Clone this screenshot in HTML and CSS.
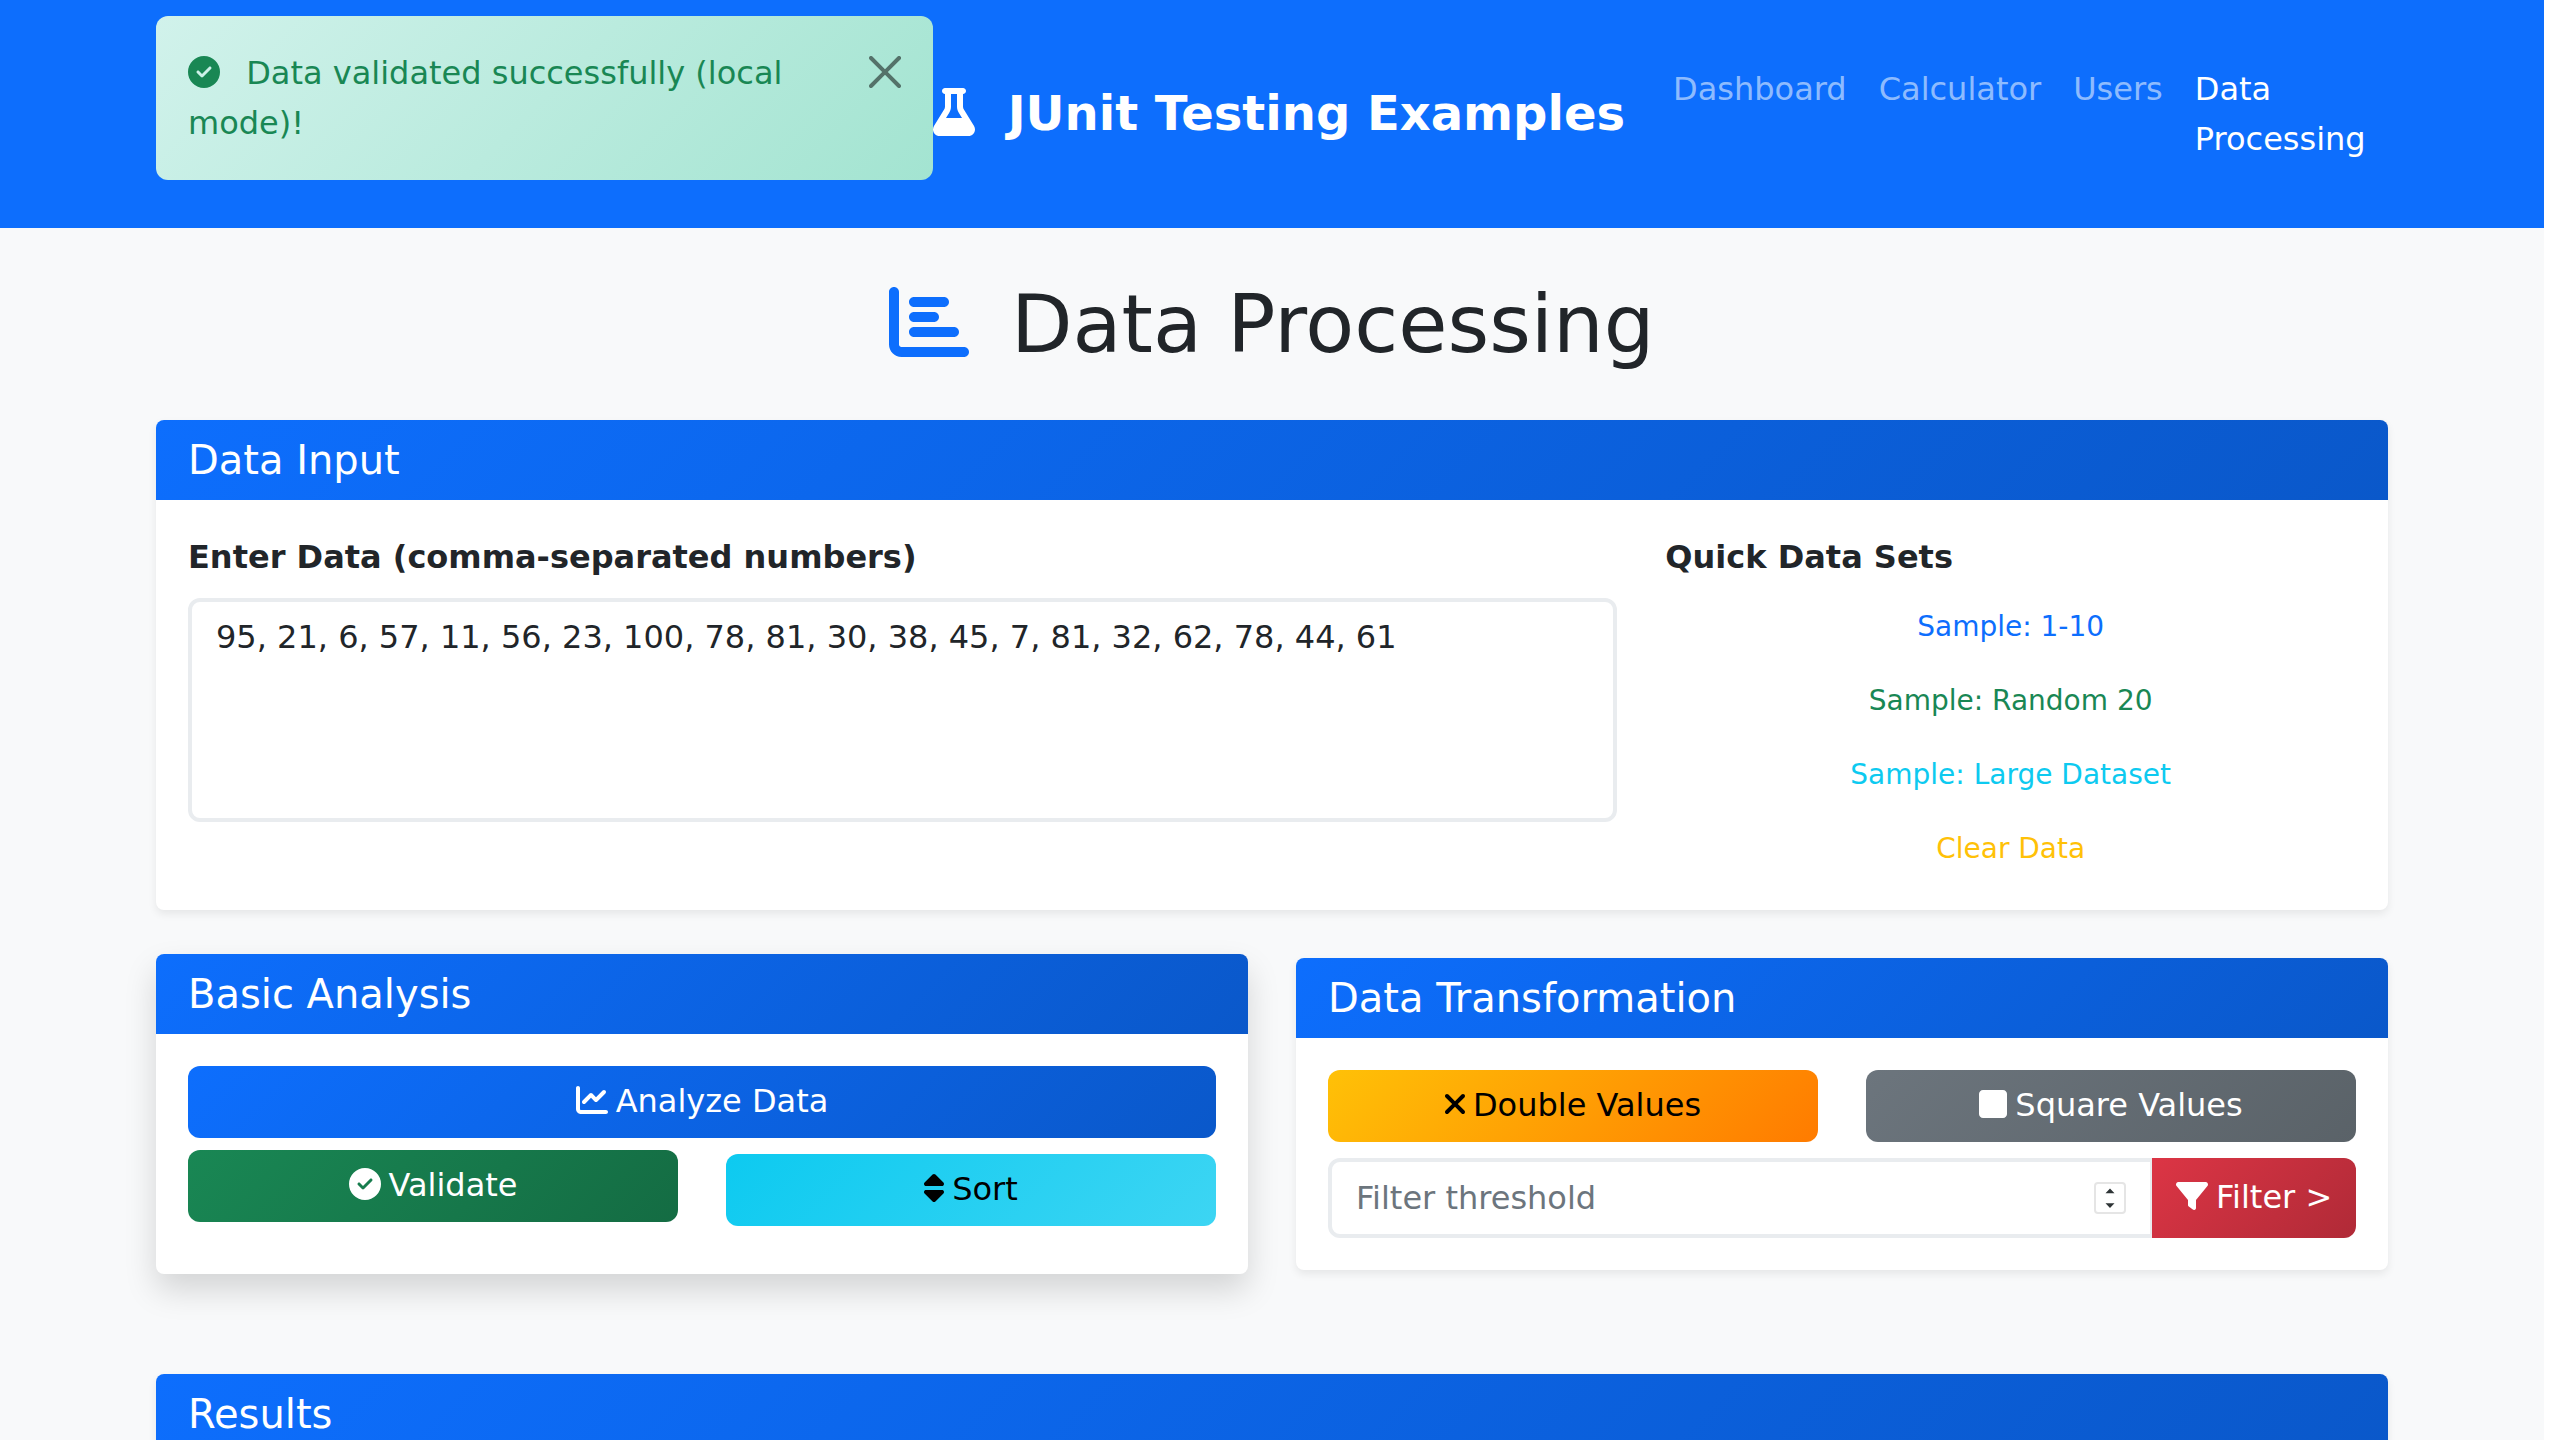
FILE: index.html
```html
<!DOCTYPE html>
<html lang="en">
<head>
<meta charset="utf-8">
<title>Data Processing - JUnit Testing Examples</title>
<link rel="stylesheet" href="styles.css">
</head>
<body>
<div class="page">
  <nav class="navbar">
    <div class="container navbar-inner">
      <div class="alert" role="alert">
        <svg class="icon alert-icon" viewBox="0 0 512 512"><path d="M256 512A256 256 0 1 0 256 0a256 256 0 1 0 0 512zM369 209L241 337c-9.4 9.4-24.6 9.4-33.9 0l-64-64c-9.4-9.4-9.4-24.6 0-33.9s24.6-9.4 33.9 0l47 47L335 175c9.4-9.4 24.6-9.4 33.9 0s9.4 24.6 0 33.9z"/></svg>
        Data validated successfully (local mode)!
        <button class="close" type="button" aria-label="Close"><svg viewBox="0 0 16 16"><path d="M.293.293a1 1 0 0 1 1.414 0L8 6.586 14.293.293a1 1 0 1 1 1.414 1.414L9.414 8l6.293 6.293a1 1 0 0 1-1.414 1.414L8 9.414l-6.293 6.293a1 1 0 0 1-1.414-1.414L6.586 8 .293 1.707a1 1 0 0 1 0-1.414z"/></svg></button>
      </div>
      <a class="brand"><svg class="icon icon-448 brand-icon" viewBox="0 0 448 512"><path d="M288 0H160 128C110.3 0 96 14.3 96 32s14.3 32 32 32V196.8c0 11.8-3.3 23.5-9.5 33.5L10.3 406.2C3.6 417.2 0 429.7 0 442.6C0 480.9 31.1 512 69.4 512H378.6c38.3 0 69.4-31.1 69.4-69.4c0-12.8-3.6-25.4-10.3-36.4L329.5 230.4c-6.2-10.1-9.5-21.7-9.5-33.5V64c17.7 0 32-14.3 32-32s-14.3-32-32-32H288zM192 196.8V64h64V196.8c0 23.7 6.6 46.9 19 67.1L309.5 320h-171L173 263.9c12.4-20.2 19-43.4 19-67.1z"/></svg> JUnit Testing Examples</a>
      <div class="nav-links">
        <a class="nav-link">Dashboard</a>
        <a class="nav-link">Calculator</a>
        <a class="nav-link">Users</a>
        <a class="nav-link active">Data Processing</a>
      </div>
    </div>
  </nav>

  <main class="container">
    <h1 class="title"><svg class="icon title-icon" viewBox="0 0 512 512"><path d="M32 32c17.7 0 32 14.3 32 32V400c0 8.8 7.2 16 16 16H480c17.7 0 32 14.3 32 32s-14.3 32-32 32H80c-44.2 0-80-35.8-80-80V64C0 46.3 14.3 32 32 32zm96 96c0-17.7 14.3-32 32-32l192 0c17.7 0 32 14.3 32 32s-14.3 32-32 32l-192 0c-17.7 0-32-14.3-32-32zm32 64H288c17.7 0 32 14.3 32 32s-14.3 32-32 32H160c-17.7 0-32-14.3-32-32s14.3-32 32-32zm0 96H416c17.7 0 32 14.3 32 32s-14.3 32-32 32H160c-17.7 0-32-14.3-32-32s14.3-32 32-32z"/></svg> Data Processing</h1>

    <section class="card">
      <h5 class="card-header">Data Input</h5>
      <div class="card-body input-grid">
        <div>
          <label class="label" for="data">Enter Data (comma-separated numbers)</label>
          <textarea id="data" class="textarea" spellcheck="false">95, 21, 6, 57, 11, 56, 23, 100, 78, 81, 30, 38, 45, 7, 81, 32, 62, 78, 44, 61</textarea>
        </div>
        <div>
          <div class="label">Quick Data Sets</div>
          <div class="samples">
            <button class="sample sample-primary" type="button">Sample: 1-10</button>
            <button class="sample sample-success" type="button">Sample: Random 20</button>
            <button class="sample sample-info" type="button">Sample: Large Dataset</button>
            <button class="sample sample-warning" type="button">Clear Data</button>
          </div>
        </div>
      </div>
    </section>

    <div class="card-row">
      <section class="card card-raised">
        <h5 class="card-header">Basic Analysis</h5>
        <div class="card-body analysis-body">
          <button class="btn btn-primary" type="button"><svg class="icon" viewBox="0 0 512 512"><path d="M64 64c0-17.7-14.3-32-32-32S0 46.3 0 64V400c0 44.2 35.8 80 80 80H480c17.7 0 32-14.3 32-32s-14.3-32-32-32H80c-8.8 0-16-7.2-16-16V64zm406.6 86.6c12.5-12.5 12.5-32.8 0-45.3s-32.8-12.5-45.3 0L320 210.7l-57.4-57.4c-12.5-12.5-32.8-12.5-45.3 0l-112 112c-12.5 12.5-12.5 32.8 0 45.3s32.8 12.5 45.3 0L240 221.3l57.4 57.4c12.5 12.5 32.8 12.5 45.3 0l128-128z"/></svg>Analyze Data</button>
          <div class="btn-pair">
            <button class="btn btn-success btn-raised" type="button"><svg class="icon" viewBox="0 0 512 512"><path d="M256 512A256 256 0 1 0 256 0a256 256 0 1 0 0 512zM369 209L241 337c-9.4 9.4-24.6 9.4-33.9 0l-64-64c-9.4-9.4-9.4-24.6 0-33.9s24.6-9.4 33.9 0l47 47L335 175c9.4-9.4 24.6-9.4 33.9 0s9.4 24.6 0 33.9z"/></svg>Validate</button>
            <button class="btn btn-info" type="button"><svg class="icon icon-320" viewBox="0 0 320 512"><path d="M137.4 41.4c12.5-12.5 32.8-12.5 45.3 0l128 128c9.2 9.2 11.9 22.9 6.9 34.9s-16.6 19.8-29.6 19.8H32c-12.9 0-24.6-7.8-29.6-19.8s-2.2-25.7 6.9-34.9l128-128zm0 429.3l-128-128c-9.2-9.2-11.9-22.9-6.9-34.9s16.6-19.8 29.6-19.8H288c12.9 0 24.6 7.8 29.6 19.8s2.2 25.7-6.9 34.9l-128 128c-12.5 12.5-32.8 12.5-45.3 0z"/></svg>Sort</button>
          </div>
        </div>
      </section>

      <section class="card">
        <h5 class="card-header">Data Transformation</h5>
        <div class="card-body transform-body">
          <div class="btn-pair">
            <button class="btn btn-warning" type="button"><svg class="icon icon-320" viewBox="0 0 320 512"><path d="M310.6 150.6c12.5-12.5 12.5-32.8 0-45.3s-32.8-12.5-45.3 0L160 210.7 54.6 105.4c-12.5-12.5-32.8-12.5-45.3 0s-12.5 32.8 0 45.3L114.7 256 9.4 361.4c-12.5 12.5-12.5 32.8 0 45.3s32.8 12.5 45.3 0L160 301.3 265.4 406.6c12.5 12.5 32.8 12.5 45.3 0s12.5-32.8 0-45.3L205.3 256 310.6 150.6z"/></svg>Double Values</button>
            <button class="btn btn-secondary" type="button"><svg class="icon icon-448" viewBox="0 0 448 512"><path d="M0 96C0 60.7 28.7 32 64 32H384c35.3 0 64 28.7 64 64V416c0 35.3-28.7 64-64 64H64c-35.3 0-64-28.7-64-64V96z"/></svg>Square Values</button>
          </div>
          <div class="filter-group">
            <div class="filter-field">
              <input class="filter-input" type="text" placeholder="Filter threshold" aria-label="Filter threshold">
              <span class="spinner"><svg viewBox="0 0 32 32"><path d="M11.5 11.2L16 6.5l4.5 4.7zM11.5 21.3h9L16 26z"/></svg></span>
            </div>
            <button class="btn btn-danger" type="button"><svg class="icon" viewBox="0 0 512 512"><path d="M3.9 54.9C10.5 40.9 24.5 32 40 32H472c15.5 0 29.5 8.9 36.1 22.9s4.6 30.5-5.2 42.5L320 320.9V448c0 12.1-6.8 23.2-17.7 28.6s-23.8 4.3-33.5-3l-64-48c-8.1-6-12.8-15.5-12.8-25.6V320.9L9 97.3C-.7 85.4-2.8 68.8 3.9 54.9z"/></svg>Filter &gt;</button>
          </div>
        </div>
      </section>
    </div>

    <section class="card">
      <h5 class="card-header">Results</h5>
      <div class="card-body"></div>
    </section>
  </main>
</div>
</body>
</html>
```
FILE: styles.css
```css
* { box-sizing: border-box; }
html { background: #fff; }
body {
  margin: 0;
  height: 1440px;
  overflow: hidden;
  font: 32px/50px "DejaVu Sans", sans-serif;
  color: #212529;
}
button, input, textarea { font: inherit; margin: 0; }
h1, h5 { margin: 0; font-weight: 400; }

.page { width: 2544px; height: 1440px; overflow: hidden; background: #f8f9fa; }
.container { width: 2232px; margin: 0 auto; }

.icon { width: 1em; height: 1em; fill: currentColor; overflow: visible; vertical-align: -0.125em; }
.icon-448 { width: 0.875em; }
.icon-320 { width: 0.625em; }

/* Navbar */
.navbar { background: #0d6efd; }
.navbar-inner { display: flex; align-items: center; height: 228px; }
.alert {
  position: relative;
  flex: 0 0 777px;
  margin-bottom: 32px;
  padding: 32px 96px 32px 32px;
  border-radius: 12px;
  background: linear-gradient(135deg, #d1f2eb, #a3e4d1);
  color: #198754;
}
.alert-icon { margin-right: 16px; }
.close {
  position: absolute;
  top: 0;
  right: 0;
  padding: 40px 32px;
  border: 0;
  background: none;
  line-height: 0;
  opacity: 0.5;
}
.close svg { width: 32px; height: 32px; }
.brand {
  flex: none;
  margin-right: 32px;
  padding-bottom: 2px;
  font-size: 48px;
  line-height: 72px;
  font-weight: 700;
  color: #fff;
  white-space: nowrap;
}
.brand-icon { margin-right: 16px; }
.nav-links { display: flex; flex: 1; }
.nav-link { padding: 16px; color: rgba(255, 255, 255, 0.55); }
.nav-link.active { color: #fff; }

/* Heading */
.title { margin: 48px 0; padding-top: 1px; height: 96px; font-size: 80px; line-height: 96px; text-align: center; }
.title-icon { margin-right: 16px; color: #0d6efd; }

/* Cards */
.card {
  margin-bottom: 48px;
  border-radius: 8px;
  background: #fff;
  box-shadow: 0 4px 8px rgba(0, 0, 0, 0.075);
}
.card-header {
  padding: 16px 32px;
  border-radius: 8px 8px 0 0;
  background: linear-gradient(135deg, #0d6efd, #0a58ca);
  font-size: 40px;
  line-height: 48px;
  color: #fff;
}
.card-body { padding: 32px; }
.card-row {
  display: grid;
  grid-template-columns: 1fr 1fr;
  column-gap: 48px;
  align-items: start;
  margin-bottom: 48px;
}
.card-row .card { margin-bottom: 0; }
.card-row .card-raised {
  margin-bottom: 48px;
  transform: translateY(-4px);
  box-shadow: 0 16px 32px rgba(0, 0, 0, 0.15);
}

/* Data input */
.input-grid { display: grid; grid-template-columns: 1429.33px 1fr; column-gap: 48px; }
.label { display: block; margin-bottom: 16px; font-weight: 700; }
.textarea {
  display: block;
  width: 100%;
  height: 224px;
  padding: 11px 24px;
  border: 4px solid #e9ecef;
  border-radius: 12px;
  background: #fff;
  color: #212529;
  line-height: 48px;
  resize: none;
}
.samples { display: grid; row-gap: 16px; }
.sample { padding: 8px 16px; border: 0; background: none; font-size: 28px; line-height: 42px; }
.sample-primary { color: #0d6efd; }
.sample-success { color: #198754; }
.sample-info { color: #0dcaf0; }
.sample-warning { color: #ffc107; }

/* Buttons */
.btn {
  width: 100%;
  height: 72px;
  padding: 11px 24px 13px;
  border: 0;
  border-radius: 12px;
  line-height: 48px;
  color: #fff;
  white-space: nowrap;
}
.btn .icon { margin-right: 8px; }
.btn-primary { background: linear-gradient(135deg, #0d6efd, #0a58ca); }
.btn-success { background: linear-gradient(135deg, #198754, #146c43); }
.btn-info { background: linear-gradient(135deg, #0dcaf0, #3dd5f3); color: #000; }
.btn-warning { background: linear-gradient(135deg, #ffc107, #ff7b00); color: #000; }
.btn-secondary { background: linear-gradient(135deg, #6c757d, #5a6268); }
.btn-danger { background: linear-gradient(135deg, #dc3545, #b02a37); }
.btn-raised { transform: translateY(-4px); }
.btn-pair { display: grid; grid-template-columns: 1fr 1fr; column-gap: 48px; }
.analysis-body { display: grid; row-gap: 16px; padding-bottom: 48px; }
.transform-body { display: grid; row-gap: 16px; }

/* Filter */
.filter-group { display: flex; }
.filter-field { position: relative; flex: 1; display: flex; }
.filter-input {
  width: 100%;
  height: 80px;
  padding: 0 24px;
  border: 4px solid #e9ecef;
  border-radius: 12px 0 0 12px;
  background: #fff;
  color: #212529;
}
.filter-input::placeholder { color: #6c757d; opacity: 1; }
.spinner {
  position: absolute;
  top: 24px;
  right: 28px;
  width: 32px;
  height: 32px;
  border: 2px solid #e5e5e5;
  border-radius: 4px;
  background: #fff;
  line-height: 0;
}
.spinner svg { width: 32px; height: 32px; margin: -2px; fill: #2e3436; }
.filter-group .btn {
  position: relative;
  flex: 0 0 204px;
  width: 204px;
  height: 80px;
  margin-left: -2px;
  border-radius: 0 12px 12px 0;
}
```
